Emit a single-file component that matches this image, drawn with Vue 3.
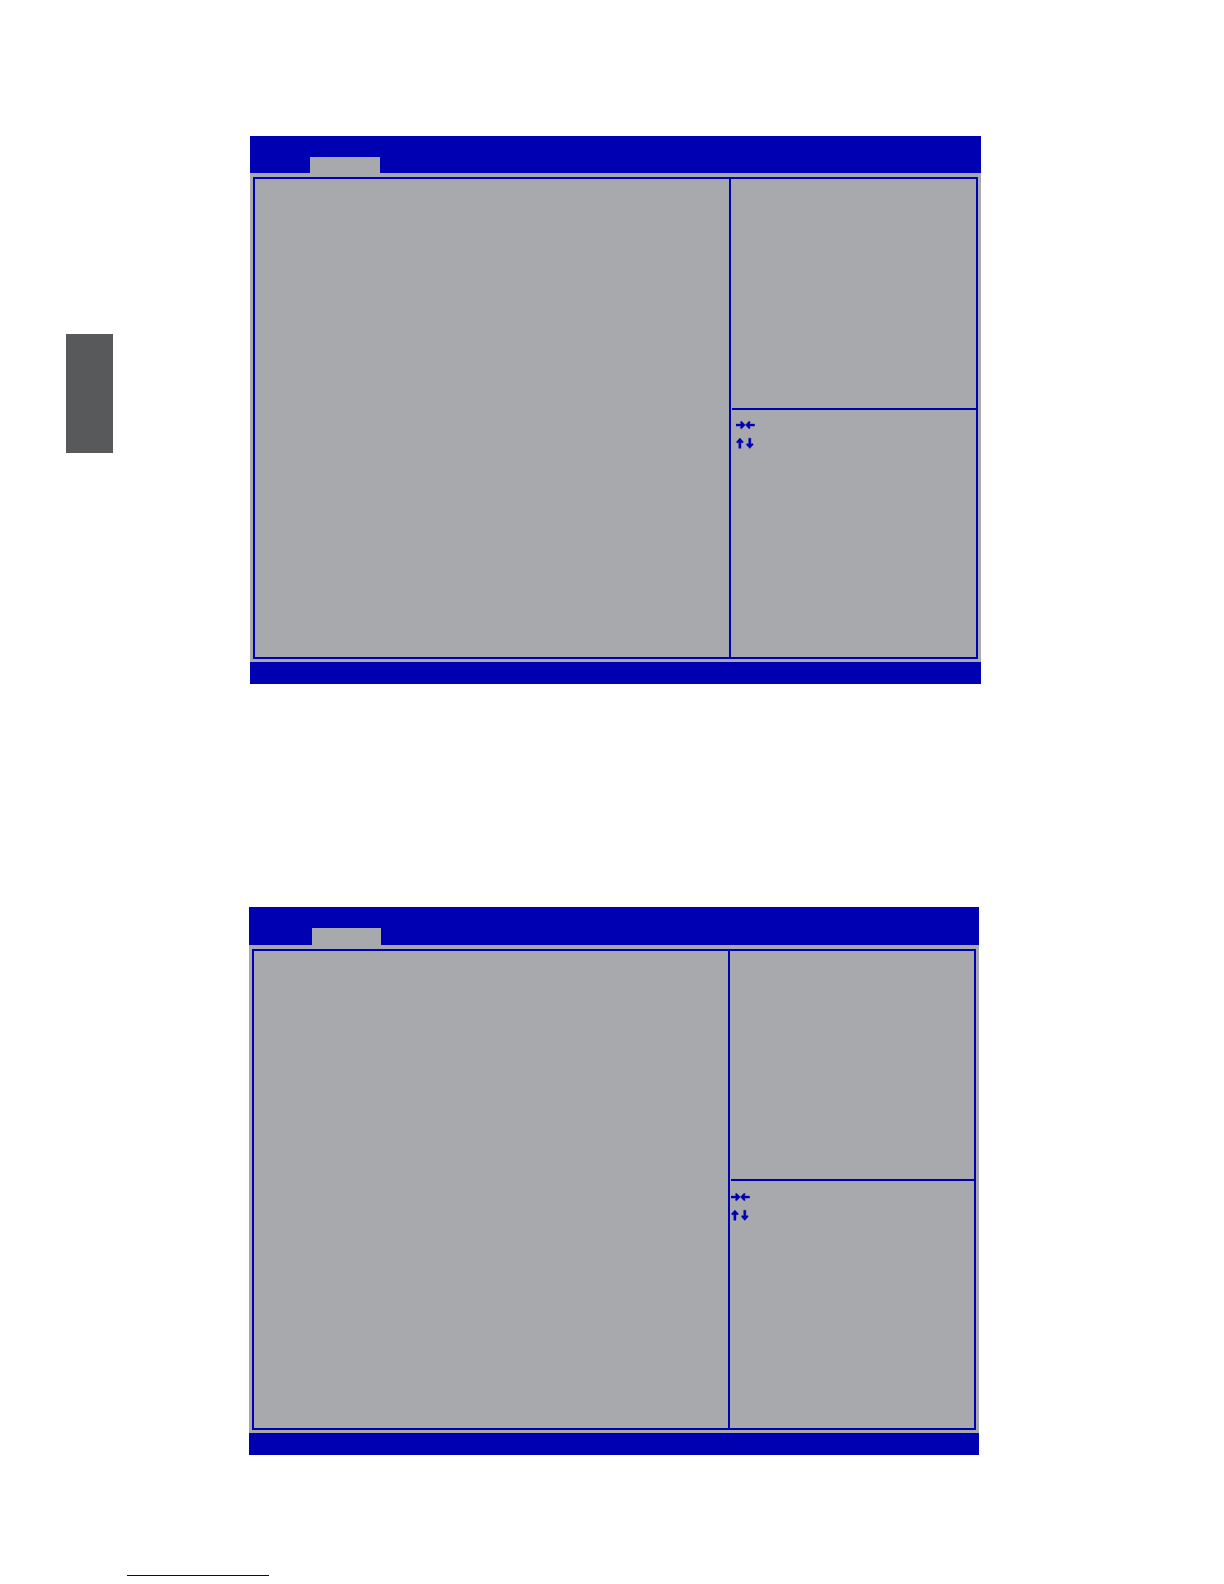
<script setup>
const screens = [
  { key: 'upper', label: 'Upper setup screen' },
  { key: 'lower', label: 'Lower setup screen' },
]
</script>

<template>
  <div class="page">
    <aside class="margin">
      <div class="chapter-mark"></div>
    </aside>

    <main class="content">
      <section
        v-for="screen in screens"
        :key="screen.key"
        class="screen"
        :class="`screen--${screen.key}`"
        :aria-label="screen.label"
      >
        <header class="screen__header">
          <button type="button" class="screen__tab" aria-label="Active tab"></button>
        </header>

        <div class="screen__body">
          <div class="frame">
            <div class="frame__options"></div>
            <div class="frame__side">
              <div class="frame__help"></div>
              <div class="frame__keys">
                <svg class="keys" width="19" height="29" viewBox="0 0 19 29" aria-hidden="true">
                  <!-- right / left -->
                  <path d="M0 4.1H5L4.4 1.8L5.6 1.3L9.3 5L5.6 8.7L4.4 8.2L5 6.1H0Z" />
                  <path d="M18.6 4.1H13.6L14.2 1.8L13 1.3L9.5 5L13 8.7L14.2 8.2L13.6 6.1H18.6Z" />
                  <!-- up / down -->
                  <path d="M3.9 18L7.3 21.8L6.8 23L5 22.4V28.3H2.8V22.4L1 23L0.5 21.8Z" />
                  <path d="M13.8 28.5L17.2 24.7L16.7 23.5L14.9 24.1V18.2H12.7V24.1L10.9 23.5L10.4 24.7Z" />
                </svg>
              </div>
            </div>
          </div>
        </div>

        <footer class="screen__footer"></footer>
      </section>
    </main>

    <a class="footer-link" href="#" aria-label="Website"></a>
  </div>
</template>

<style>
body {
  margin: 0;
  background: #fff;
}
</style>

<style scoped>
.page {
  display: grid;
  grid-template-columns: 113px 1fr;
  padding-bottom: 8px;
  font-family: "Liberation Sans", Arial, sans-serif;
}

.margin {
  padding: 334px 0 0 66px;
}

.chapter-mark {
  height: 119px;
  background: #58595b;
}

.content {
  display: flex;
  flex-direction: column;
  gap: 223px;
  padding-top: 136px;
}

.screen {
  --blue: #0000b3;
  --grey: #a7a9ac;
  background: var(--grey);
}

.screen--upper {
  --header-height: 37px;
  --tab-offset: 60px;
  --tab-width: 70px;
  --tab-height: 16px;
  --side-width: 245px;
  --help-height: 229px;
  --options-height: 478px;
  --keys-top: 10px;
  --keys-indent: 5px;
  margin: 0 243px 0 137px;
}

.screen--lower {
  --header-height: 38px;
  --tab-offset: 63px;
  --tab-width: 69px;
  --tab-height: 17px;
  --side-width: 244px;
  --help-height: 228px;
  --options-height: 477px;
  --keys-top: 11px;
  --keys-indent: 1px;
  margin: 0 245px 0 136px;
}

.screen__header {
  display: flex;
  align-items: flex-end;
  height: var(--header-height);
  padding-left: var(--tab-offset);
  box-sizing: border-box;
  background: var(--blue);
}

.screen__tab {
  width: var(--tab-width);
  height: var(--tab-height);
  padding: 0;
  border: 0;
  border-radius: 0;
  background: var(--grey);
}

.screen__body {
  padding: 4px 3px 3px;
}

.frame {
  display: grid;
  grid-template-columns: 1fr auto;
  min-height: var(--options-height);
  border: 2px solid var(--blue);
}

.frame__side {
  display: flex;
  flex-direction: column;
  width: var(--side-width);
  border-left: 2px solid var(--blue);
}

.frame__help {
  height: var(--help-height);
  margin-left: 1px;
  border-bottom: 2px solid var(--blue);
}

.frame__keys {
  padding: var(--keys-top) 0 0 var(--keys-indent);
}

.keys {
  display: block;
  fill: var(--blue);
  stroke: var(--blue);
  stroke-width: 0.4;
}

.screen__footer {
  height: 22px;
  background: var(--blue);
}

.footer-link {
  grid-column: 1 / -1;
  justify-self: start;
  width: 142px;
  height: 121px;
  margin-left: 127px;
  box-sizing: border-box;
  border-bottom: 1px solid #00008f;
}
</style>
